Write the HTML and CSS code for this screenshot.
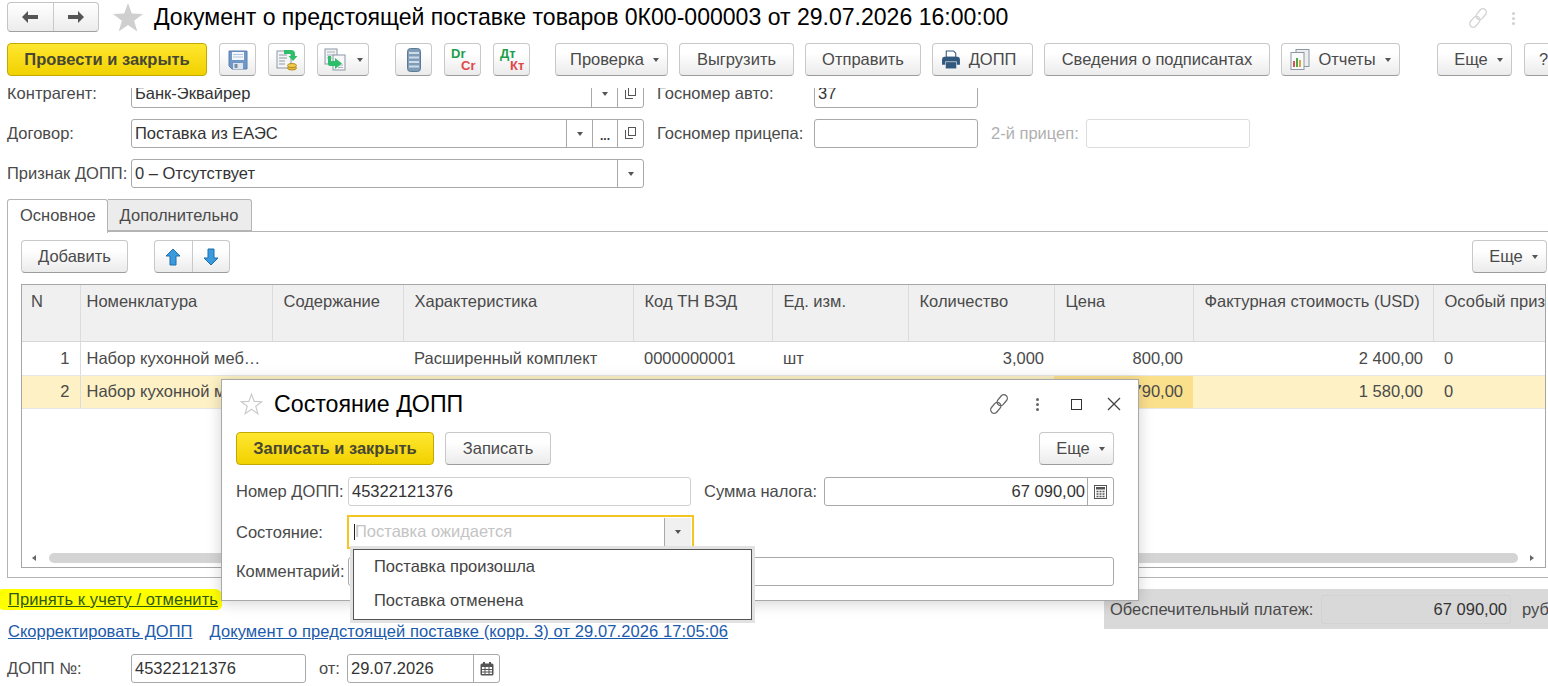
FILE: index.html
```html
<!DOCTYPE html>
<html lang="ru">

<head>
  <meta charset="UTF-8">
  <title>Документ о предстоящей поставке товаров</title>
  <link rel="stylesheet" href="styles.css">
</head>

<body>

  <!-- Title bar -->
  <div class="topbar">
    <div class="nav-group">
      <button class="nav-btn">
        <svg width="18" height="14" viewBox="0 0 18 14"><path d="M7 1 L1 7 L7 13 L7 9 L17 9 L17 5 L7 5 Z" fill="#555" /></svg>
      </button>
      <button class="nav-btn">
        <svg width="18" height="14" viewBox="0 0 18 14"><path d="M11 1 L17 7 L11 13 L11 9 L1 9 L1 5 L11 5 Z" fill="#555" /></svg>
      </button>
    </div>
    <svg class="title-star" width="30" height="29" viewBox="0 0 30 29"><path d="M15 0 L18.8 10.6 L30 10.9 L21.1 17.7 L24.3 28.5 L15 22.1 L5.7 28.5 L8.9 17.7 L0 10.9 L11.2 10.6 Z" fill="#cfcfcf" /></svg>
    <h1 class="title">Документ о предстоящей поставке товаров 0К00-000003 от 29.07.2026 16:00:00</h1>
    <svg class="title-link" width="20" height="20" viewBox="0 0 20 20"><g fill="none" stroke="#d4d4d4" stroke-width="1.4" transform="rotate(-50 10 10)"><rect x="-1" y="6.5" width="12" height="7" rx="3.5" /><rect x="9" y="6.5" width="12" height="7" rx="3.5" /></g></svg>
    <div class="title-dots"><i></i><i></i><i></i></div>
  </div>

  <!-- Command bar -->
  <div class="toolbar">
    <button class="btn btn-main w-main">Провести и закрыть</button>
    <button class="btn w-icon after-main">
      <svg width="20" height="20" viewBox="0 0 20 20"><path d="M1 1 H19 V19 H4 L1 16 Z" fill="#6f97c8" stroke="#5a7fae" /><rect x="4" y="2" width="12" height="8" fill="#f4f7fb" /><path d="M5 4.5 H15 M5 7 H15" stroke="#b5c6dc" /><rect x="5" y="13" width="10" height="6" fill="#dfe5ec" /><rect x="6.5" y="14" width="3" height="4" fill="#7d8da0" /></svg>
    </button>
    <button class="btn w-icon">
      <svg width="22" height="22" viewBox="0 0 22 22"><rect x="1" y="2" width="14" height="17" fill="#f5f5f5" stroke="#8c98a6" /><path d="M3 6 H11 M3 9 H11 M3 12 H9 M3 15 H9" stroke="#8c98a6" /><ellipse cx="16" cy="19" rx="4.5" ry="2" fill="#e6b93c" stroke="#b38a1c" /><ellipse cx="16" cy="16.5" rx="4.5" ry="2" fill="#f2cd55" stroke="#b38a1c" /><path d="M8 1 H15 Q19 1 19 5 V7 H21.5 L17 12 L12.5 7 H15 V5 H8 Z" fill="#2ebd6b" /></svg>
    </button>
    <button class="btn w-icon-menu">
      <svg width="24" height="23" viewBox="0 0 24 23"><rect x="1" y="1" width="12" height="15" fill="#f2f2f2" stroke="#8c98a6" /><path d="M3 4 H11 M3 7 H11 M3 10 H8" stroke="#a8b2bd" /><rect x="9" y="7" width="12" height="15" fill="#f7f7f7" stroke="#8c98a6" /><path d="M14 17 H19 M14 19.5 H19" stroke="#a8b2bd" /><path d="M4 8 H7 V13 H11 V10 L18 15.5 L11 21 V18 H6 Q4 18 4 16 Z" fill="#2ebd6b" /></svg>
      <span class="caret"></span>
    </button>
    <button class="btn w-icon after-group">
      <svg width="14" height="24" viewBox="0 0 14 24"><rect x="0.5" y="0.5" width="13" height="23" rx="3" fill="#7f9db8" stroke="#5d7a94" /><path d="M2 5 H12 M2 9.5 H12 M2 14 H12 M2 18.5 H12" stroke="#cfdbe6" stroke-width="2" /></svg>
    </button>
    <button class="btn w-icon dk">
      <span class="dk-top">Dr</span><span class="dk-bottom">Cr</span>
    </button>
    <button class="btn w-icon dk">
      <span class="dk-top">Дт</span><span class="dk-bottom">Кт</span>
    </button>
    <button class="btn w-check after-group-2">Проверка<span class="caret"></span></button>
    <button class="btn w-export">Выгрузить</button>
    <button class="btn w-send">Отправить</button>
    <button class="btn w-dopp">
      <svg width="20" height="19" viewBox="0 0 19 18"><path d="M5 1 H12 L14 3 V7 H5 Z" fill="#fff" stroke="#33587e" /><path d="M1 9 Q1 6.5 3 6.5 H16 Q18 6.5 18 9 V14 H15 V11 H4 V14 H1 Z" fill="#33587e" /><rect x="4.5" y="11.5" width="10" height="6" fill="#33587e" /></svg>
      ДОПП
    </button>
    <button class="btn w-signers">Сведения о подписантах</button>
    <button class="btn w-reports">
      <svg width="20" height="21" viewBox="0 0 20 21"><rect x="6" y="0.5" width="13" height="17" fill="#eee" stroke="#8c98a6" /><rect x="1" y="3.5" width="13" height="17" fill="#fafafa" stroke="#8c98a6" /><rect x="3" y="12" width="2" height="6" fill="#d9534f" /><rect x="6" y="9" width="2" height="9" fill="#4aa84a" /><rect x="9" y="11" width="2" height="7" fill="#d9a53c" /></svg>
      Отчеты<span class="caret"></span>
    </button>
    <button class="btn w-more after-group-3">Еще<span class="caret"></span></button>
    <button class="btn w-help">?</button>
  </div>

  <div class="content">

    <!-- Document header fields, scrolled a little under the command bar -->
    <div class="form-row first-row">
      <label class="label label-main">Контрагент:</label>
      <div class="field field-main">
        <span class="field-text">Банк-Эквайрер</span>
        <span class="field-btn"><span class="caret"></span></span>
        <span class="field-btn"><span class="open-icon"></span></span>
      </div>
      <label class="label label-car">Госномер авто:</label>
      <div class="field field-car"><span class="field-text">37</span></div>
    </div>
    <div class="form-row">
      <label class="label label-main">Договор:</label>
      <div class="field field-main">
        <span class="field-text">Поставка из ЕАЭС</span>
        <span class="field-btn"><span class="caret"></span></span>
        <span class="field-btn field-dots">...</span>
        <span class="field-btn"><span class="open-icon"></span></span>
      </div>
      <label class="label label-car">Госномер прицепа:</label>
      <div class="field field-car"></div>
      <label class="label label-trailer">2-й прицеп:</label>
      <div class="field field-car field-off"></div>
    </div>
    <div class="form-row">
      <label class="label label-main">Признак ДОПП:</label>
      <div class="field field-main">
        <span class="field-text">0 – Отсутствует</span>
        <span class="field-btn"><span class="caret"></span></span>
      </div>
    </div>

    <!-- Tabs -->
    <div class="tabs">
      <div class="tab tab-active">Основное</div>
      <div class="tab">Дополнительно</div>
    </div>

    <div class="panel">
      <div class="panel-bar">
        <button class="btn w-add">Добавить</button>
        <div class="arrow-group">
          <button class="arrow-btn">
            <svg width="16" height="18" viewBox="0 0 16 18"><path d="M8 1 L15 8 H11 V17 H5 V8 H1 Z" fill="#3a9ae0" stroke="#1f6ea8" /></svg>
          </button>
          <button class="arrow-btn">
            <svg width="16" height="18" viewBox="0 0 16 18"><path d="M8 17 L15 10 H11 V1 H5 V10 H1 Z" fill="#3a9ae0" stroke="#1f6ea8" /></svg>
          </button>
        </div>
        <button class="btn w-more panel-more">Еще<span class="caret"></span></button>
      </div>

      <div class="grid-box">
        <table class="grid">
          <colgroup>
            <col class="c-n"><col class="c-name"><col class="c-desc"><col class="c-char"><col class="c-code">
            <col class="c-unit"><col class="c-qty"><col class="c-price"><col class="c-cost"><col class="c-sign">
          </colgroup>
          <thead>
            <tr>
              <th>N</th>
              <th>Номенклатура</th>
              <th>Содержание</th>
              <th>Характеристика</th>
              <th>Код ТН ВЭД</th>
              <th>Ед. изм.</th>
              <th>Количество</th>
              <th>Цена</th>
              <th>Фактурная стоимость (USD)</th>
              <th>Особый признак</th>
            </tr>
          </thead>
          <tbody>
            <tr>
              <td class="num n-cell">1</td>
              <td class="cut">Набор кухонной мебели</td>
              <td></td>
              <td>Расширенный комплект</td>
              <td>0000000001</td>
              <td>шт</td>
              <td class="num">3,000</td>
              <td class="num">800,00</td>
              <td class="num">2 400,00</td>
              <td>0</td>
            </tr>
            <tr class="row-selected">
              <td class="num n-cell">2</td>
              <td class="cut">Набор кухонной мебели</td>
              <td></td>
              <td></td>
              <td></td>
              <td></td>
              <td></td>
              <td class="num cell-current">790,00</td>
              <td class="num">1 580,00</td>
              <td>0</td>
            </tr>
          </tbody>
        </table>
        <div class="hscroll">
          <span class="hscroll-left"></span>
          <span class="hscroll-thumb"></span>
          <span class="hscroll-right"></span>
        </div>
      </div>
    </div>

    <!-- Below the tabs -->
    <div class="bottom">
      <div class="bottom-left">
        <a class="link link-marked">Принять к учету / отменить</a>
        <div class="links">
          <a class="link">Скорректировать ДОПП</a>
          <a class="link link-doc">Документ о предстоящей поставке (корр. 3) от 29.07.2026 17:05:06</a>
        </div>
        <div class="form-row">
          <label class="label label-main">ДОПП №:</label>
          <div class="field field-number"><span class="field-text">45322121376</span></div>
          <label class="label label-from">от:</label>
          <div class="field field-date">
            <span class="field-text">29.07.2026</span>
            <span class="field-btn">
              <svg width="14" height="14" viewBox="0 0 14 14"><rect x="0.5" y="1.5" width="13" height="12" rx="1.5" fill="#555" /><rect x="2" y="5" width="10" height="7" fill="#fff" /><path d="M4 0 V3 M10 0 V3" stroke="#555" stroke-width="2" /><path d="M2 7.5 H12 M2 10 H12 M5 5 V12 M9 5 V12" stroke="#555" /></svg>
            </span>
          </div>
        </div>
      </div>
      <div class="payment">
        <span class="payment-label">Обеспечительный платеж:</span>
        <span class="payment-value">67 090,00</span>
        <span class="payment-unit">руб</span>
      </div>
    </div>
  </div>

  <!-- Modal window -->
  <div class="modal">
    <div class="modal-head">
      <svg width="23" height="22" viewBox="0 0 30 29"><path d="M15 1.5 L18.5 11 L28.5 11.4 L20.6 17.5 L23.4 27.2 L15 21.5 L6.6 27.2 L9.4 17.5 L1.5 11.4 L11.5 11 Z" fill="#fff" stroke="#c9c9c9" stroke-width="1.5" /></svg>
      <h2 class="modal-title">Состояние ДОПП</h2>
      <svg class="modal-link" width="20" height="20" viewBox="0 0 20 20"><g fill="none" stroke="#666" stroke-width="1.3" transform="rotate(-50 10 10)"><rect x="-1" y="6.5" width="12" height="7" rx="3.5" /><rect x="9" y="6.5" width="12" height="7" rx="3.5" /></g></svg>
      <div class="modal-dots"><i></i><i></i><i></i></div>
      <span class="modal-square"></span>
      <svg class="modal-close" width="14" height="14" viewBox="0 0 14 14"><path d="M1 1 L13 13 M13 1 L1 13" stroke="#444" stroke-width="1.3" /></svg>
    </div>

    <div class="modal-bar">
      <button class="btn btn-main w-save-close">Записать и закрыть</button>
      <button class="btn w-save">Записать</button>
      <button class="btn w-more panel-more">Еще<span class="caret"></span></button>
    </div>

    <div class="form-row">
      <label class="label label-modal">Номер ДОПП:</label>
      <div class="field field-dopp"><span class="field-text">45322121376</span></div>
      <label class="label label-tax">Сумма налога:</label>
      <div class="field field-tax">
        <span class="field-text num">67 090,00</span>
        <span class="field-btn">
          <svg width="13" height="14" viewBox="0 0 13 14"><rect x="0.5" y="0.5" width="12" height="13" fill="#fff" stroke="#555" /><rect x="2" y="2" width="9" height="2.5" fill="#555" /><path d="M2.5 6.5 H4.5 M5.5 6.5 H7.5 M8.5 6.5 H10.5 M2.5 9 H4.5 M5.5 9 H7.5 M8.5 9 H10.5 M2.5 11.5 H4.5 M5.5 11.5 H7.5 M8.5 11.5 H10.5" stroke="#555" stroke-width="1.6" /></svg>
        </span>
      </div>
    </div>
    <div class="form-row state-row">
      <label class="label label-modal">Состояние:</label>
      <div class="field-focus">
        <span class="text-cursor"></span>
        <span class="placeholder">Поставка ожидается</span>
        <span class="focus-btn"><span class="caret"></span></span>
      </div>
    </div>
    <div class="form-row comment-row">
      <label class="label label-modal">Комментарий:</label>
      <div class="field field-comment"></div>
    </div>

    <!-- Drop-down list of the state field -->
    <div class="dropdown">
      <div class="dropdown-item">Поставка произошла</div>
      <div class="dropdown-item">Поставка отменена</div>
    </div>
  </div>

</body>

</html>
```

FILE: styles.css
```css
/* Page */
body {
  margin: 0;
  width: 1548px;
  height: 686px;
  overflow: hidden;
  background-color: #fff;
  font-family: "Liberation Sans", Arial, sans-serif;
  font-size: 16.5px;
  color: #4a4a4a;
}

/* Title bar */
.topbar {
  display: flex;
  align-items: center;
  height: 36px;
  padding-left: 7px;
}
.nav-group {
  display: flex;
  height: 30px;
  margin-top: -3px;
  border: 1px solid #c4c4c4;
  border-bottom-color: #a0a0a0;
  border-radius: 4px;
  background: linear-gradient(#fff, #ececec);
  box-sizing: border-box;
  width: 92px;
}
.nav-btn {
  flex: 1;
  padding: 0;
  border: 0;
  background: none;
  line-height: 0;
}
.nav-btn + .nav-btn {
  border-left: 1px solid #c9c9c9;
}
.title-star {
  margin-left: 14px;
  margin-top: -2px;
}
.title {
  margin: -1px 0 0 11px;
  font-size: 23.05px;
  font-weight: normal;
  color: #000;
  white-space: nowrap;
}
.title-link {
  margin-left: auto;
  margin-right: 24px;
}
.title-dots, .modal-dots {
  display: flex;
  flex-direction: column;
  gap: 2px;
  margin-right: 33px;
}
.title-dots i, .modal-dots i {
  width: 3px;
  height: 3px;
  border-radius: 50%;
  background-color: #d0d0d0;
}

/* Buttons */
.btn {
  display: inline-flex;
  align-items: center;
  justify-content: center;
  flex: none;
  height: 33px;
  padding: 0;
  border: 1px solid #c8c8c8;
  border-bottom-color: #9c9c9c;
  border-radius: 4px;
  background: linear-gradient(#fff 30%, #ebebeb);
  box-sizing: border-box;
  font: inherit;
  color: #4a4a4a;
  white-space: nowrap;
}
.btn-main {
  border-color: #c2a800;
  background: linear-gradient(#ffe730, #f1d100);
  font-weight: bold;
  color: #474733;
}
.caret {
  display: inline-block;
  width: 0;
  height: 0;
  margin-left: 9px;
  border: 3px solid transparent;
  border-top: 4px solid #555;
  border-bottom: 0;
}

/* Command bar */
.toolbar {
  display: flex;
  gap: 11px;
  width: 1560px;
  margin-top: 7px;
  padding-left: 7px;
}
.w-main { width: 200px; }
.w-icon { width: 37px; margin-right: 1px; }
.w-icon-menu { width: 52px; }
.w-check { width: 113px; padding-left: 6px; }
.w-export { width: 115px; }
.w-send { width: 116px; }
.w-dopp { width: 101px; gap: 8px; padding-right: 8px; }
.w-signers { width: 226px; }
.w-reports { width: 119px; gap: 8px; }
.w-reports .caret { margin-left: 1px; }
.w-more { width: 75px; padding-left: 8px; }
.w-help { width: 40px; margin-left: 1px; padding-left: 14px; justify-content: flex-start; }
.after-main { margin-left: 1px; }
.after-group { margin-left: 15px; }
.after-group-2 { margin-left: 13px; }
.after-group-3 { margin-left: 26px; }

/* Dr/Cr and Дт/Кт icons are just two small words */
.dk {
  flex-direction: column;
  align-items: flex-start;
  padding-left: 6px;
  font-size: 13px;
  font-weight: bold;
  line-height: 12px;
}
.dk-top { color: #1f9e4a; }
.dk-bottom {
  margin-left: 10px;
  color: #e2474b;
}

/* Form rows */
.content {
  height: 598px;
  margin-top: 12px;
  overflow: hidden;
}
.form-row {
  display: flex;
  align-items: center;
  height: 29px;
  margin-bottom: 11px;
  padding-left: 7px;
}
.first-row {
  margin-top: -9px;
}
.label {
  flex: none;
  white-space: nowrap;
}
.label-main { width: 124px; }
.label-car { width: 157px; margin-left: 13px; }
.label-trailer { width: 95px; margin-left: 13px; color: #b0b0b0; }
.label-from { width: 28px; margin-left: 13px; }

.field {
  display: flex;
  align-items: stretch;
  flex: none;
  height: 29px;
  border: 1px solid #a9a9a9;
  border-radius: 3px;
  box-sizing: border-box;
  background-color: #fff;
  color: #333;
}
.field-text {
  flex: 1;
  align-self: center;
  padding-left: 3px;
  white-space: nowrap;
}
.field-btn {
  display: flex;
  align-items: center;
  justify-content: center;
  width: 25px;
  border-left: 1px solid #a9a9a9;
}
.field-btn .caret { margin-left: 0; }
.field-dots {
  align-items: flex-end;
  padding-bottom: 7px;
  box-sizing: border-box;
  font-weight: bold;
  font-size: 12px;
  line-height: 8px;
}
.open-icon {
  position: relative;
  width: 7px;
  height: 8px;
  margin: 1px 0 0 -3px;
  border: 1px solid #555;
  border-top: 0;
  border-right: 0;
}
.open-icon::after {
  content: "";
  position: absolute;
  top: -3px;
  left: 2px;
  width: 6px;
  height: 7px;
  border: 1px solid #555;
  background-color: #fff;
}
.field-main { width: 513px; }
.field-car { width: 164px; }
.field-off { border-color: #dcdcdc; }
.field-number { width: 175px; }
.field-date { width: 153px; }

/* Tabs */
.tabs {
  display: flex;
  height: 32px;
  margin-left: 7px;
}
.tab {
  height: 32px;
  padding: 6px 13px 0 12px;
  border: 1px solid #b4b4b4;
  border-left: 0;
  border-radius: 0 3px 0 0;
  box-sizing: border-box;
  background-color: #ececec;
}
.tab-active {
  position: relative;
  z-index: 1;
  height: 34px;
  padding-right: 11px;
  border-left: 1px solid #b4b4b4;
  border-bottom: 0;
  border-radius: 3px 3px 0 0;
  background-color: #fff;
}

/* Tab panel */
.panel {
  height: 347px;
  margin-left: 7px;
  padding: 8px 0 0 13px;
  border: 1px solid #b4b4b4;
  border-right: 0;
  box-sizing: border-box;
}
.panel-bar {
  display: flex;
  height: 33px;
  margin-bottom: 11px;
}
.w-add { width: 107px; }
.arrow-group {
  display: flex;
  width: 76px;
  margin-left: 26px;
  border: 1px solid #c8c8c8;
  border-bottom-color: #9c9c9c;
  border-radius: 4px;
  box-sizing: border-box;
  background: linear-gradient(#fff 30%, #ebebeb);
}
.arrow-btn {
  flex: 1;
  padding: 0;
  border: 0;
  background: none;
  line-height: 0;
}
.arrow-btn + .arrow-btn {
  border-left: 1px solid #c9c9c9;
}
.panel-more {
  margin-left: auto;
  margin-right: 1px;
}

/* Table */
.grid-box {
  position: relative;
  width: 1525px;
  height: 284px;
  border: 1px solid #a6a6a6;
  box-sizing: border-box;
  overflow: hidden;
}
.grid {
  width: 1523px;
  table-layout: fixed;
  border-collapse: collapse;
}
.c-n { width: 58px; }
.c-name { width: 192px; }
.c-desc { width: 131px; }
.c-char { width: 230px; }
.c-code { width: 139px; }
.c-unit { width: 136px; }
.c-qty { width: 146px; }
.c-price { width: 139px; }
.c-cost { width: 240px; }
.c-sign { width: 112px; }
.grid th {
  height: 56px;
  padding: 7px 10px 0 11px;
  border-right: 1px solid #dcdcdc;
  border-bottom: 1px solid #d6d6d6;
  box-sizing: border-box;
  background-color: #f0f0f0;
  font-weight: normal;
  text-align: left;
  vertical-align: top;
  white-space: nowrap;
  overflow: hidden;
}
.grid th:first-child {
  padding-left: 9px;
}
.grid th:nth-child(2) {
  padding-left: 6px;
}
.grid td {
  height: 33px;
  padding: 0 10px 0 11px;
  border-bottom: 1px solid #e6e6e6;
  box-sizing: border-box;
  white-space: nowrap;
  overflow: hidden;
}
.grid tbody tr:first-child td {
  height: 34px;
}
.grid td.cut {
  padding: 0 9px 0 6px;
  text-overflow: ellipsis;
}
.grid td.n-cell {
  border-right: 1px solid #dcdcdc;
}
.num {
  text-align: right;
}
.row-selected td {
  background-color: #fdf1c5;
  border-bottom-color: #e6e6e6;
}
.row-selected td.cell-current {
  background-color: #fbe08c;
}

/* Horizontal scrollbar of the table */
.hscroll {
  position: absolute;
  left: 0;
  right: 0;
  bottom: 4px;
  display: flex;
  align-items: center;
  height: 10px;
}
.hscroll-left, .hscroll-right {
  width: 0;
  height: 0;
  border: 3px solid transparent;
}
.hscroll-left {
  margin-left: 10px;
  border-right: 4px solid #666;
  border-left: 0;
}
.hscroll-right {
  margin-right: 11px;
  border-left: 4px solid #666;
  border-right: 0;
}
.hscroll-thumb {
  flex: 1;
  height: 10px;
  margin: 0 12px 0 13px;
  border-radius: 5px;
  background-color: #d4d4d4;
}

/* Under the tabs */
.bottom {
  display: flex;
  justify-content: space-between;
  margin-top: 11px;
}
.bottom-left {
  flex: none;
}
.link {
  color: #1c5aac;
  text-decoration: underline;
  white-space: nowrap;
}
.link-marked {
  display: block;
  width: 214px;
  height: 21px;
  padding-left: 8px;
  line-height: 21px;
  letter-spacing: 0.1px;
  background-color: #ffff00;
  border-radius: 2px 7px 5px 3px;
  color: #2d5a10;
}
.links {
  display: flex;
  gap: 17px;
  margin-top: 12px;
  padding-left: 8px;
}
.link-doc {
  letter-spacing: 0.1px;
}
.bottom-left .form-row {
  margin-top: 13px;
}
.payment {
  display: flex;
  align-items: center;
  width: 438px;
  height: 40px;
  padding-left: 6px;
  background-color: #d9d9d9;
  box-sizing: content-box;
  white-space: nowrap;
  overflow: hidden;
}
.payment-label {
  width: 211px;
  flex: none;
}
.payment-value {
  flex: none;
  width: 185px;
  height: 27px;
  padding-right: 3px;
  line-height: 27px;
  border: 1px solid #d2d2d2;
  border-radius: 3px;
  text-align: right;
  color: #333;
}
.payment-unit {
  margin-left: 11px;
}

/* Modal window */
.modal {
  position: absolute;
  top: 379px;
  left: 221px;
  width: 918px;
  height: 222px;
  padding: 0 24px 0 14px;
  border: 1px solid #a8a8a8;
  box-sizing: border-box;
  background-color: #fff;
  box-shadow: 0 2px 14px rgba(0, 0, 0, 0.18);
}
.modal-head {
  display: flex;
  align-items: center;
  height: 48px;
  margin-right: -7px;
  padding-left: 4px;
}
.modal-title {
  margin: 0 0 0 11px;
  font-size: 23.2px;
  font-weight: normal;
  color: #000;
}
.modal-link {
  margin-left: auto;
}
.modal-dots {
  margin: 0 0 0 27px;
}
.modal-dots i {
  background-color: #666;
}
.modal-square {
  width: 11px;
  height: 11px;
  margin-left: 32px;
  border: 1px solid #333;
  box-sizing: border-box;
}
.modal-close {
  margin-left: 25px;
}
.modal-bar {
  display: flex;
  gap: 11px;
  height: 33px;
  margin: 4px 0 12px;
}
.w-save-close { width: 198px; }
.w-save { width: 106px; }
.modal .panel-more { margin-right: 0; }
.modal .form-row {
  margin-bottom: 0;
  padding-left: 0;
}
.label-modal { width: 112px; }
.label-tax { width: 120px; margin-left: 13px; }
.field-dopp { width: 343px; border-color: #d0d0d0; }
.field-tax { width: 290px; }
.field-tax .num { padding-right: 2px; }
.modal .state-row { height: 34px; margin-top: 9px; }
.modal .comment-row { margin-top: 8px; }
.field-comment { width: 766px; }
.field-focus {
  display: flex;
  align-items: center;
  width: 347px;
  height: 34px;
  margin-left: -1px;
  padding-bottom: 1px;
  border: 2px solid #f5c622;
  box-sizing: border-box;
  background-color: #fff;
}
.text-cursor {
  width: 1px;
  height: 16px;
  margin-left: 5px;
  background-color: #222;
}
.placeholder {
  flex: 1;
  color: #c4c4c4;
}
.focus-btn {
  display: flex;
  align-items: center;
  justify-content: center;
  width: 26px;
  height: 28px;
  margin-right: 1px;
  border-left: 1px solid #a9a9a9;
  background-color: #f0f0f0;
}
.focus-btn .caret { margin-left: 0; }

/* Drop-down list */
.dropdown {
  position: absolute;
  top: 169px;
  left: 131px;
  width: 399px;
  height: 71px;
  border: 1px solid #555;
  box-sizing: border-box;
  background-color: #fff;
  box-shadow: 0 0 0 3px #e2e2e2;
}
.dropdown-item {
  height: 34px;
  padding-left: 20px;
  line-height: 33px;
  color: #444;
}
```
